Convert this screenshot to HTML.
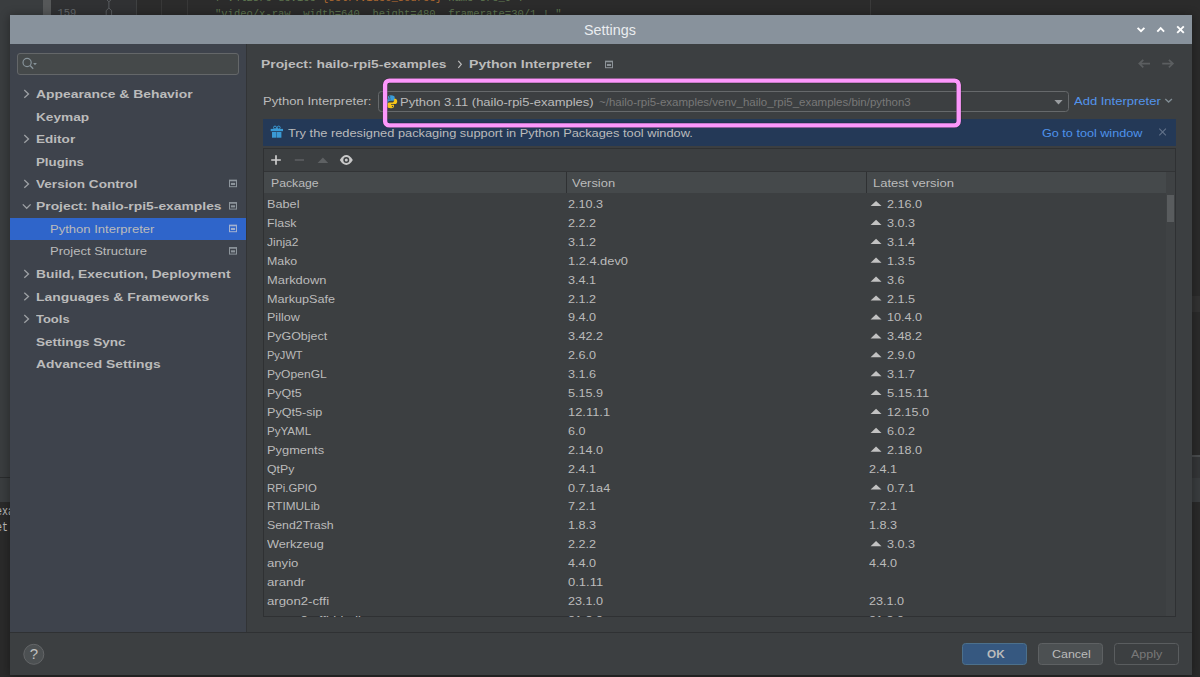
<!DOCTYPE html>
<html><head><meta charset="utf-8"><title>Settings</title>
<style>
html,body{margin:0;padding:0;background:#2b2b2b;}
body{width:1200px;height:677px;overflow:hidden;position:relative;font-family:'Liberation Sans',sans-serif;}
div,span,svg{position:absolute;box-sizing:border-box;}
.t{font-size:11.6px;line-height:14px;white-space:pre;color:#bbbbbb;transform-origin:0 0;display:block;}
.b{font-weight:bold;}
.m{font-family:'Liberation Mono',monospace;white-space:pre;}
</style></head><body>
<!-- background IDE -->
<div style="left:0;top:0;width:44px;height:477px;background:#3a3d3f"></div>
<div style="left:43px;top:0;width:8px;height:477px;background:#565859"></div>
<div style="left:51px;top:0;width:1149px;height:455px;background:#2b2b2b"></div>
<div style="left:51px;top:0;width:85px;height:455px;background:#303133"></div>
<div style="left:136px;top:0;width:1px;height:20px;background:#3f4142"></div>
<div style="left:161px;top:0;width:1px;height:20px;background:#383838"></div>
<div style="left:187px;top:0;width:1px;height:20px;background:#383838"></div>
<div style="left:870px;top:0;width:1px;height:455px;background:#3a3a3a"></div>
<div style="left:1180px;top:296px;width:20px;height:16px;background:#323232"></div>
<span class="m" style="left:57.5px;top:-9px;font-size:10.5px;line-height:13px;color:#64686b">158</span>
<span class="m" style="left:57.5px;top:7px;font-size:10.5px;line-height:13px;color:#64686b">159</span>
<span class="m" style="left:215px;top:-8px;font-size:10.5px;line-height:13px;color:#6a8759;opacity:.85">f"v4l2src device=<span style="position:static;color:#cc7832">{self.video_source}</span> name=src_0 ! "</span>
<span class="m" style="left:215px;top:7.5px;font-size:10.5px;line-height:13px;color:#6a8759;opacity:.8">"video/x-raw, width=640, height=480, framerate=30/1 ! "</span>
<svg width="200" height="15" viewBox="0 0 200 15" style="left:0;top:0"><path d="M106.2 -3h5.4v2.2l-2.7 2.6l-2.7-2.6zM108.9 1.8v6.4M106.2 16v-5.4l2.7-2.6l2.7 2.6v5.4" stroke="#5f6265" stroke-width="0.9" fill="none"/></svg>
<div style="left:0;top:477px;width:1200px;height:1px;background:#2a2c2d"></div>
<div style="left:0;top:478px;width:1200px;height:24px;background:#3a3d3f"></div>

<div style="left:1180px;top:455px;width:20px;height:2px;background:#4a4d4f"></div>
<div style="left:1180px;top:457px;width:20px;height:21px;background:#343638"></div>
<div style="left:1180px;top:478px;width:20px;height:24px;background:#3a3d3f"></div>
<div style="left:0;top:502px;width:1200px;height:175px;background:#2a2a2a"></div>
<span class="m" style="left:-3.6px;top:504.7px;font-size:12.5px;line-height:15px;color:#bdbdbd;transform:scaleX(.8);transform-origin:0 0">exa</span>
<span class="m" style="left:-3.6px;top:520.9px;font-size:12.5px;line-height:15px;color:#bdbdbd;transform:scaleX(.8);transform-origin:0 0">et</span>

<!-- dialog -->
<div style="left:10px;top:15px;width:1182px;height:659.5px;background:#3c3f41;box-shadow:0 1px 9px 1px rgba(0,0,0,0.32)">
  <div style="left:0;top:0;width:1182px;height:29px;background:#88929c"></div>
  <div style="left:0;top:29px;width:236px;height:588px;background:#3e434c"></div>
  <div style="left:236px;top:29px;width:1px;height:588px;background:#323436"></div>
  <div style="left:0;top:617px;width:1182px;height:1px;background:#2f3133"></div>
  <div style="left:0;top:202.5px;width:236px;height:22.5px;background:#2f65ca"></div>
  <div style="left:7px;top:38px;width:222px;height:21.5px;background:#45494a;border:1px solid #646769;border-radius:3px"></div>
</div>
<span class="t" style="left:584.2px;top:21.6px;font-size:14.5px;line-height:16px;color:#f3f5f7;transform:scaleX(0.99);-webkit-text-stroke:0;opacity:.92">Settings</span>

<!-- interpreter combo -->
<div style="left:377.5px;top:91px;width:691.5px;height:21px;border:1px solid #66696b;border-radius:3.5px;background:#3c3f41"></div>
<!-- banner -->
<div style="left:263.3px;top:118.7px;width:912.6px;height:27.6px;background:#243957"></div>
<!-- table -->
<div style="left:263px;top:147.5px;width:913px;height:469.5px;border:1px solid #2f3133;background:#3c3f41"></div>
<div style="left:264px;top:171px;width:911px;height:1px;background:#323436"></div>
<div style="left:264px;top:172px;width:902px;height:21px;background:#45494b"></div>
<div style="left:565.5px;top:172px;width:1px;height:21px;background:#2f3133"></div>
<div style="left:866.2px;top:172px;width:1px;height:21px;background:#2f3133"></div>
<div style="left:1166px;top:172px;width:9px;height:444px;background:#3f4244"></div>
<div style="left:1167px;top:195px;width:7px;height:26.7px;background:#595c5e"></div>
<!-- buttons -->
<div style="left:962.4px;top:643px;width:65px;height:21.7px;background:#365880;border:1px solid #4c708c;border-radius:3.5px"></div>
<div style="left:1038.2px;top:643px;width:65px;height:21.7px;background:#4c5052;border:1px solid #5e6163;border-radius:3.5px"></div>
<div style="left:1114.2px;top:643px;width:65px;height:21.7px;border:1px solid #5a5d5f;border-radius:3.5px"></div>

<svg width="1200" height="677" viewBox="0 0 1200 677" style="left:0;top:0">
<path d="M24.3 90.1L28.5 93.9L24.3 97.7" stroke="#9da0a4" stroke-width="1.3" fill="none"/>
<path d="M24.3 135.1L28.5 138.9L24.3 142.7" stroke="#9da0a4" stroke-width="1.3" fill="none"/>
<path d="M24.3 180.1L28.5 183.9L24.3 187.7" stroke="#9da0a4" stroke-width="1.3" fill="none"/>
<path d="M24.3 270.1L28.5 273.9L24.3 277.7" stroke="#9da0a4" stroke-width="1.3" fill="none"/>
<path d="M24.3 292.7L28.5 296.5L24.3 300.3" stroke="#9da0a4" stroke-width="1.3" fill="none"/>
<path d="M24.3 315.1L28.5 318.9L24.3 322.7" stroke="#9da0a4" stroke-width="1.3" fill="none"/>
<path d="M22.8 204.4L26.7 208.3L30.6 204.4" stroke="#9da0a4" stroke-width="1.3" fill="none"/>
<rect x="229.5" y="180.3" width="7" height="6.4" fill="none" stroke="#8d959c" stroke-width="1"/><rect x="229" y="179.8" width="8" height="1.5" fill="#8d959c"/><rect x="230.9" y="182.9" width="4.2" height="2.1" fill="#8d959c"/>
<rect x="229.5" y="202.7" width="7" height="6.4" fill="none" stroke="#8d959c" stroke-width="1"/><rect x="229" y="202.2" width="8" height="1.5" fill="#8d959c"/><rect x="230.9" y="205.3" width="4.2" height="2.1" fill="#8d959c"/>
<rect x="229.5" y="225.3" width="7" height="6.4" fill="none" stroke="#a3b1cf" stroke-width="1"/><rect x="229" y="224.8" width="8" height="1.5" fill="#a3b1cf"/><rect x="230.9" y="227.9" width="4.2" height="2.1" fill="#a3b1cf"/>
<rect x="229.5" y="247.7" width="7" height="6.4" fill="none" stroke="#8d959c" stroke-width="1"/><rect x="229" y="247.2" width="8" height="1.5" fill="#8d959c"/><rect x="230.9" y="250.3" width="4.2" height="2.1" fill="#8d959c"/>
<rect x="605.5" y="61.3" width="7" height="6.4" fill="none" stroke="#8d9398" stroke-width="1"/><rect x="605" y="60.8" width="8" height="1.5" fill="#8d9398"/><rect x="606.9" y="63.9" width="4.2" height="2.1" fill="#8d9398"/>
<circle cx="27.1" cy="62.5" r="4.1" fill="none" stroke="#87939a" stroke-width="1.2"/><path d="M30.1 65.6L33.2 68.7" stroke="#87939a" stroke-width="1.4"/><path d="M33.1 63h3.8l-1.9 2.3z" fill="#87939a"/>
<path d="M1137.6 27.8L1141 31.2L1144.4 27.8" stroke="#fff" stroke-width="1.9" fill="none"/>
<path d="M1157.3 31.6L1160.7 28.2L1164.1 31.6" stroke="#fff" stroke-width="1.9" fill="none"/>
<path d="M1177.2 26.3L1183.8 32.9M1183.8 26.3L1177.2 32.9" stroke="#fff" stroke-width="1.9" fill="none"/>
<path d="M1150 63.6H1139.4M1143.3 59.8L1139.3 63.6L1143.3 67.4" stroke="#5b5e60" stroke-width="1.7" fill="none"/>
<path d="M1162.2 63.6H1172.8M1168.9 59.8L1172.9 63.6L1168.9 67.4" stroke="#5b5e60" stroke-width="1.7" fill="none"/>
<path d="M458.3 60.8L461.3 64.3L458.3 67.8" stroke="#bbbbbb" stroke-width="1.2" fill="none"/>
<g transform="translate(384.8,95.2)"><path d="M6.1 0C3.6 0 3.2 1.1 3.2 2v1.5h3v.6H2C.8 4.1 0 5.2 0 6.7s.8 2.7 2 2.7h1.1V7.7c0-1.2 1-2.1 2.2-2.1h2.9c1 0 1.7-.8 1.7-1.8V2c0-1-.9-2-3.8-2z" fill="#3a9bd6"/><path d="M6.3 13c2.5 0 2.9-1.1 2.9-2v-1.5h-3v-.6h4.2c1.2 0 2-1.1 2-2.6s-.8-2.7-2-2.7H9.3v1.7c0 1.2-1 2.1-2.2 2.1H4.2c-1 0-1.7.8-1.7 1.8V11c0 1 .9 2 3.8 2z" fill="#f5c518"/><rect x="4.2" y="1.1" width="1.2" height="1.2" fill="#3c3f41"/><rect x="7.1" y="10.7" width="1.2" height="1.2" fill="#3c3f41"/></g>
<path d="M1054.4 100h8.2l-4.1 4.6z" fill="#9a9da0"/>
<path d="M1165.3 98.9L1168.6 102.1L1171.9 98.9" stroke="#808c93" stroke-width="1.4" fill="none"/>
<g fill="#3a9ad5"><rect x="270.7" y="128.9" width="12.3" height="2.3"/><rect x="272" y="132" width="4.5" height="5.7"/><rect x="276.9" y="132" width="4.5" height="5.7"/><circle cx="275" cy="127.6" r="1.5" fill="none" stroke="#3a9ad5" stroke-width="1"/><circle cx="278.7" cy="127.6" r="1.5" fill="none" stroke="#3a9ad5" stroke-width="1"/><rect x="276.1" y="127.8" width="1.5" height="1.5"/></g>
<path d="M1159.3 128.7L1165.9 135.3M1165.9 128.7L1159.3 135.3" stroke="#62728a" stroke-width="1.1" fill="none"/>
<path d="M271.2 160h9.6M276 155.2v9.6" stroke="#cdcdcd" stroke-width="1.7" fill="none"/>
<path d="M294.8 160h9.2" stroke="#5e6163" stroke-width="1.5" fill="none"/>
<path d="M317.6 163h10.6l-5.3-5.5z" fill="#5e6163"/>
<path d="M339.8 160c2-3.3 4.2-4.9 6.5-4.9s4.5 1.6 6.5 4.9c-2 3.3-4.2 4.9-6.5 4.9s-4.5-1.6-6.5-4.9z" fill="#c8c8c8"/><circle cx="346.3" cy="160" r="3" fill="#3c3f41"/><circle cx="346.3" cy="160" r="1.5" fill="#c8c8c8"/>
<path d="M870.6 206.1h10.9l-5.45-5.2z" fill="#c2c2c2"/>
<path d="M870.6 225h10.9l-5.45-5.2z" fill="#c2c2c2"/>
<path d="M870.6 243.9h10.9l-5.45-5.2z" fill="#c2c2c2"/>
<path d="M870.6 262.8h10.9l-5.45-5.2z" fill="#c2c2c2"/>
<path d="M870.6 281.7h10.9l-5.45-5.2z" fill="#c2c2c2"/>
<path d="M870.6 300.6h10.9l-5.45-5.2z" fill="#c2c2c2"/>
<path d="M870.6 319.5h10.9l-5.45-5.2z" fill="#c2c2c2"/>
<path d="M870.6 338.4h10.9l-5.45-5.2z" fill="#c2c2c2"/>
<path d="M870.6 357.3h10.9l-5.45-5.2z" fill="#c2c2c2"/>
<path d="M870.6 376.2h10.9l-5.45-5.2z" fill="#c2c2c2"/>
<path d="M870.6 395.1h10.9l-5.45-5.2z" fill="#c2c2c2"/>
<path d="M870.6 414h10.9l-5.45-5.2z" fill="#c2c2c2"/>
<path d="M870.6 432.9h10.9l-5.45-5.2z" fill="#c2c2c2"/>
<path d="M870.6 451.8h10.9l-5.45-5.2z" fill="#c2c2c2"/>
<path d="M870.6 489.6h10.9l-5.45-5.2z" fill="#c2c2c2"/>
<path d="M870.6 546.3h10.9l-5.45-5.2z" fill="#c2c2c2"/>
<circle cx="33.8" cy="654.3" r="10" fill="#4c5052" stroke="#646668" stroke-width="1"/>
</svg>
<span class="t" style="left:29.7px;top:645.2px;font-size:15px;line-height:17px;color:#c0c0c0">?</span>
<span class="t b" style="left:36.0px;top:87.0px;transform:scaleX(1.197)">Appearance &amp; Behavior</span>
<span class="t b" style="left:36.0px;top:109.6px;transform:scaleX(1.179)">Keymap</span>
<span class="t b" style="left:36.0px;top:132.0px;transform:scaleX(1.170)">Editor</span>
<span class="t b" style="left:36.0px;top:154.6px;transform:scaleX(1.146)">Plugins</span>
<span class="t b" style="left:36.0px;top:177.0px;transform:scaleX(1.172)">Version Control</span>
<span class="t b" style="left:36.0px;top:199.4px;transform:scaleX(1.195)">Project: hailo-rpi5-examples</span>
<span class="t" style="left:50.3px;top:222.0px;transform:scaleX(1.125)">Python Interpreter</span>
<span class="t" style="left:50.3px;top:244.4px;transform:scaleX(1.123)">Project Structure</span>
<span class="t b" style="left:36.0px;top:267.0px;transform:scaleX(1.189)">Build, Execution, Deployment</span>
<span class="t b" style="left:36.0px;top:289.6px;transform:scaleX(1.200)">Languages &amp; Frameworks</span>
<span class="t b" style="left:36.0px;top:312.0px;transform:scaleX(1.118)">Tools</span>
<span class="t b" style="left:36.0px;top:334.6px;transform:scaleX(1.169)">Settings Sync</span>
<span class="t b" style="left:36.0px;top:357.0px;transform:scaleX(1.194)">Advanced Settings</span>
<span class="t b" style="left:261.4px;top:57.1px;transform:scaleX(1.195)">Project: hailo-rpi5-examples</span>
<span class="t b" style="left:469.0px;top:57.1px;transform:scaleX(1.218)">Python Interpreter</span>
<span class="t" style="left:263.0px;top:94.0px;transform:scaleX(1.129)">Python Interpreter:</span>
<span class="t" style="left:400.4px;top:95.0px;transform:scaleX(1.118)">Python 3.11 (hailo-rpi5-examples)</span>
<span class="t" style="left:598.8px;top:97.0px;transform:scaleX(1.148);font-size:10px;line-height:12px;color:#787878">~/hailo-rpi5-examples/venv_hailo_rpi5_examples/bin/python3</span>
<span class="t" style="left:1073.8px;top:94.0px;transform:scaleX(1.122);color:#5394ec">Add Interpreter</span>
<span class="t" style="left:287.7px;top:126.0px;transform:scaleX(1.105)">Try the redesigned packaging support in Python Packages tool window.</span>
<span class="t" style="left:1041.8px;top:126.0px;transform:scaleX(1.089);color:#4e92ea">Go to tool window</span>
<span class="t" style="left:271.0px;top:176.0px;transform:scaleX(1.056)">Package</span>
<span class="t" style="left:572.0px;top:176.0px;transform:scaleX(1.115)">Version</span>
<span class="t" style="left:873.2px;top:176.0px;transform:scaleX(1.122)">Latest version</span>
<span class="t b" style="left:986.5px;top:647.0px;transform:scaleX(1.012)">OK</span>
<span class="t" style="left:1052.0px;top:647.0px;transform:scaleX(1.072)">Cancel</span>
<span class="t" style="left:1131.0px;top:647.0px;transform:scaleX(1.079);color:#787878">Apply</span>
<div style="left:0;top:193.5px;width:1200px;height:423px;overflow:hidden"><div style="left:0;top:-193.5px;width:1200px;height:677px"><span class="t" style="left:267.0px;top:197.0px;transform:scaleX(1.096)">Babel</span><span class="t" style="left:567.8px;top:197.0px;transform:scaleX(1.090)">2.10.3</span><span class="t" style="left:887.2px;top:197.0px;transform:scaleX(1.090)">2.16.0</span><span class="t" style="left:267.0px;top:215.9px;transform:scaleX(1.065)">Flask</span><span class="t" style="left:567.8px;top:215.9px;transform:scaleX(1.090)">2.2.2</span><span class="t" style="left:887.2px;top:215.9px;transform:scaleX(1.090)">3.0.3</span><span class="t" style="left:267.0px;top:234.8px;transform:scaleX(1.038)">Jinja2</span><span class="t" style="left:567.8px;top:234.8px;transform:scaleX(1.090)">3.1.2</span><span class="t" style="left:887.2px;top:234.8px;transform:scaleX(1.090)">3.1.4</span><span class="t" style="left:267.0px;top:253.7px;transform:scaleX(1.067)">Mako</span><span class="t" style="left:567.8px;top:253.7px;transform:scaleX(1.107)">1.2.4.dev0</span><span class="t" style="left:887.2px;top:253.7px;transform:scaleX(1.090)">1.3.5</span><span class="t" style="left:267.0px;top:272.6px;transform:scaleX(1.110)">Markdown</span><span class="t" style="left:567.8px;top:272.6px;transform:scaleX(1.090)">3.4.1</span><span class="t" style="left:887.2px;top:272.6px;transform:scaleX(1.083)">3.6</span><span class="t" style="left:267.0px;top:291.5px;transform:scaleX(1.089)">MarkupSafe</span><span class="t" style="left:567.8px;top:291.5px;transform:scaleX(1.090)">2.1.2</span><span class="t" style="left:887.2px;top:291.5px;transform:scaleX(1.090)">2.1.5</span><span class="t" style="left:267.0px;top:310.4px;transform:scaleX(1.080)">Pillow</span><span class="t" style="left:567.8px;top:310.4px;transform:scaleX(1.090)">9.4.0</span><span class="t" style="left:887.2px;top:310.4px;transform:scaleX(1.090)">10.4.0</span><span class="t" style="left:267.0px;top:329.3px;transform:scaleX(1.072)">PyGObject</span><span class="t" style="left:567.8px;top:329.3px;transform:scaleX(1.090)">3.42.2</span><span class="t" style="left:887.2px;top:329.3px;transform:scaleX(1.090)">3.48.2</span><span class="t" style="left:267.0px;top:348.2px;transform:scaleX(0.951)">PyJWT</span><span class="t" style="left:567.8px;top:348.2px;transform:scaleX(1.090)">2.6.0</span><span class="t" style="left:887.2px;top:348.2px;transform:scaleX(1.090)">2.9.0</span><span class="t" style="left:267.0px;top:367.1px;transform:scaleX(1.042)">PyOpenGL</span><span class="t" style="left:567.8px;top:367.1px;transform:scaleX(1.090)">3.1.6</span><span class="t" style="left:887.2px;top:367.1px;transform:scaleX(1.090)">3.1.7</span><span class="t" style="left:267.0px;top:386.0px;transform:scaleX(1.075)">PyQt5</span><span class="t" style="left:567.8px;top:386.0px;transform:scaleX(1.090)">5.15.9</span><span class="t" style="left:887.2px;top:386.0px;transform:scaleX(1.114)">5.15.11</span><span class="t" style="left:267.0px;top:404.9px;transform:scaleX(1.086)">PyQt5-sip</span><span class="t" style="left:567.8px;top:404.9px;transform:scaleX(1.114)">12.11.1</span><span class="t" style="left:887.2px;top:404.9px;transform:scaleX(1.089)">12.15.0</span><span class="t" style="left:267.0px;top:423.8px;transform:scaleX(0.996)">PyYAML</span><span class="t" style="left:567.8px;top:423.8px;transform:scaleX(1.083)">6.0</span><span class="t" style="left:887.2px;top:423.8px;transform:scaleX(1.090)">6.0.2</span><span class="t" style="left:267.0px;top:442.7px;transform:scaleX(1.108)">Pygments</span><span class="t" style="left:567.8px;top:442.7px;transform:scaleX(1.090)">2.14.0</span><span class="t" style="left:887.2px;top:442.7px;transform:scaleX(1.090)">2.18.0</span><span class="t" style="left:267.0px;top:461.6px;transform:scaleX(1.059)">QtPy</span><span class="t" style="left:567.8px;top:461.6px;transform:scaleX(1.090)">2.4.1</span><span class="t" style="left:868.8px;top:461.6px;transform:scaleX(1.090)">2.4.1</span><span class="t" style="left:267.0px;top:480.5px;transform:scaleX(0.979)">RPi.GPIO</span><span class="t" style="left:567.8px;top:480.5px;transform:scaleX(1.090)">0.7.1a4</span><span class="t" style="left:887.2px;top:480.5px;transform:scaleX(1.090)">0.7.1</span><span class="t" style="left:267.0px;top:499.4px;transform:scaleX(1.016)">RTIMULib</span><span class="t" style="left:567.8px;top:499.4px;transform:scaleX(1.090)">7.2.1</span><span class="t" style="left:868.8px;top:499.4px;transform:scaleX(1.090)">7.2.1</span><span class="t" style="left:267.0px;top:518.3px;transform:scaleX(1.063)">Send2Trash</span><span class="t" style="left:567.8px;top:518.3px;transform:scaleX(1.090)">1.8.3</span><span class="t" style="left:868.8px;top:518.3px;transform:scaleX(1.090)">1.8.3</span><span class="t" style="left:267.0px;top:537.2px;transform:scaleX(1.094)">Werkzeug</span><span class="t" style="left:567.8px;top:537.2px;transform:scaleX(1.090)">2.2.2</span><span class="t" style="left:887.2px;top:537.2px;transform:scaleX(1.090)">3.0.3</span><span class="t" style="left:267.0px;top:556.1px;transform:scaleX(1.132)">anyio</span><span class="t" style="left:567.8px;top:556.1px;transform:scaleX(1.090)">4.4.0</span><span class="t" style="left:868.8px;top:556.1px;transform:scaleX(1.090)">4.4.0</span><span class="t" style="left:267.0px;top:575.0px;transform:scaleX(1.138)">arandr</span><span class="t" style="left:567.8px;top:575.0px;transform:scaleX(1.119)">0.1.11</span><span class="t" style="left:267.0px;top:593.9px;transform:scaleX(1.138)">argon2-cffi</span><span class="t" style="left:567.8px;top:593.9px;transform:scaleX(1.090)">23.1.0</span><span class="t" style="left:868.8px;top:593.9px;transform:scaleX(1.090)">23.1.0</span><span class="t" style="left:267.0px;top:612.8px;transform:scaleX(1.133)">argon2-cffi-bindings</span><span class="t" style="left:567.8px;top:612.8px;transform:scaleX(1.090)">21.2.0</span><span class="t" style="left:868.8px;top:612.8px;transform:scaleX(1.090)">21.2.0</span></div></div>
<!-- highlight -->
<svg width="1200" height="140" viewBox="0 0 1200 140" style="left:0;top:0"><rect x="385.1" y="80.6" width="573.6" height="44.8" rx="4.2" fill="none" stroke="rgba(30,20,30,.5)" stroke-width="5.4"/><rect x="385.1" y="80.6" width="573.6" height="44.8" rx="4.2" fill="none" stroke="#fc97fb" stroke-width="4.4"/></svg>
</body></html>
